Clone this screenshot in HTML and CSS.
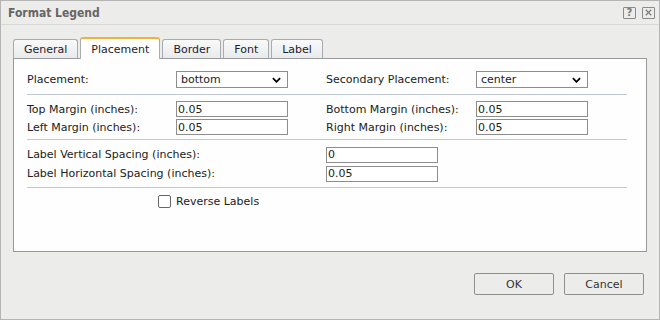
FILE: index.html
```html
<!DOCTYPE html>
<html lang="en">
<head>
  <meta charset="UTF-8" />
  <title>Format Legend</title>
  <link rel="stylesheet" href="styles.css">
</head>
<body>

  <div class="dialog">
    <div class="titlebar">
      <div class="title">Format Legend</div>
      <div class="title-icons">
        <span class="icon-btn help">?</span>
        <span class="icon-btn close">
          <svg viewBox="0 0 12 11" width="12" height="11">
            <path d="M3 2.5l6 6M9 2.5l-6 6" stroke="#7a7a7a" stroke-width="1.2" fill="none"/>
          </svg>
        </span>
      </div>
    </div>

    <div class="tabs">
      <div class="tab">General</div>
      <div class="tab active">Placement</div>
      <div class="tab">Border</div>
      <div class="tab">Font</div>
      <div class="tab">Label</div>
    </div>

    <div class="panel">
      <div class="grid first">
        <label>Placement:</label>
        <div class="select">bottom
          <svg viewBox="0 0 10 6" width="9" height="6"><path d="M1 1l4 4 4-4" stroke="#000" stroke-width="2" fill="none"/></svg>
        </div>
        <label>Secondary Placement:</label>
        <div class="select">center
          <svg viewBox="0 0 10 6" width="9" height="6"><path d="M1 1l4 4 4-4" stroke="#000" stroke-width="2" fill="none"/></svg>
        </div>
      </div>

      <div class="sep sep-1"></div>

      <div class="grid">
        <label>Top Margin (inches):</label>
        <div><input type="text" value="0.05"></div>
        <label>Bottom Margin (inches):</label>
        <div><input type="text" value="0.05"></div>
        <label>Left Margin (inches):</label>
        <div><input type="text" value="0.05"></div>
        <label>Right Margin (inches):</label>
        <div><input type="text" value="0.05"></div>
      </div>

      <div class="sep sep-2"></div>

      <div class="grid wide">
        <label>Label Vertical Spacing (inches):</label>
        <div><input type="text" value="0"></div>
        <label>Label Horizontal Spacing (inches):</label>
        <div><input type="text" value="0.05"></div>
      </div>

      <div class="sep sep-3"></div>

      <div class="check-row">
        <span class="checkbox"></span>
        <span>Reverse Labels</span>
      </div>
    </div>

    <div class="buttons">
      <button>OK</button>
      <button>Cancel</button>
    </div>
  </div>

</body>
</html>
```

FILE: styles.css
```css
body {
  margin: 0;
  padding: 0;
  font-family: 'DejaVu Sans', sans-serif;
  font-size: 11px;
  color: #222;
  background: #fff;
}

.dialog {
  width: 660px;
  height: 320px;
  box-sizing: border-box;
  border: 1px solid #b4b4b4;
  background: #ecedea;
}

.titlebar {
  height: 23px;
  border-bottom: 1px solid #d8d9d6;
  display: flex;
  align-items: center;
  justify-content: space-between;
  padding: 0 4px 0 7px;
}

.title {
  font-family: 'DejaVu Sans Condensed', 'DejaVu Sans', sans-serif;
  font-weight: bold;
  font-size: 12px;
  color: #666;
}

.title-icons {
  display: flex;
  gap: 6px;
}

.icon-btn {
  width: 11px;
  height: 10px;
  border: 1px solid #8a8a8a;
  border-radius: 1px;
  display: flex;
  align-items: center;
  justify-content: center;
  font-size: 10px;
  font-weight: bold;
  color: #7a7a7a;
  line-height: 1;
}

.tabs {
  display: flex;
  align-items: flex-end;
  gap: 2px;
  margin: 12px 0 0 12px;
  height: 21px;
}

.tab {
  height: 19px;
  box-sizing: border-box;
  padding: 0 10px;
  border: 1px solid #a7acb1;
  border-bottom: none;
  border-radius: 3px 3px 0 0;
  background: linear-gradient(#f9f9f9, #e9eaec);
  display: flex;
  align-items: center;
  font-size: 11px;
  color: #1c1c2c;
}

.tab.active {
  height: 22px;
  padding: 0 10px;
  border-top: 2px solid #f2b233;
  background: #fff;
  margin-bottom: -1px;
  position: relative;
}

.panel {
  margin: 0 12px;
  height: 194px;
  box-sizing: border-box;
  border: 1px solid #9a9a9a;
  background: #fdfefd;
  padding: 12px 19px 0 13px;
}

.grid {
  display: grid;
  grid-template-columns: 149px 150px 150px 112px;
  grid-auto-rows: 18px;
  align-items: center;
}

.grid.first {
  grid-auto-rows: 17px;
}

.grid.wide {
  grid-template-columns: 299px 112px;
  grid-auto-rows: 19px;
}

.sep {
  height: 1px;
  background: #bfc8d2;
}

.sep-1 {
  margin: 6px 0 5px;
}

.sep-2 {
  margin: 3px 0 5px;
}

.sep-3 {
  margin: 4px 0 0;
}

input {
  width: 112px;
  height: 16px;
  box-sizing: border-box;
  border: 1px solid #8d8d8d;
  padding: 0 1px;
  margin: 0;
  font-family: 'DejaVu Sans', sans-serif;
  font-size: 11px;
  color: #222;
  display: block;
}

.select {
  width: 112px;
  height: 17px;
  box-sizing: border-box;
  border: 1px solid #8d8d8d;
  background: #fff;
  padding: 0 6px 0 4px;
  display: flex;
  align-items: center;
  justify-content: space-between;
}

.check-row {
  display: flex;
  align-items: center;
  gap: 5px;
  margin: 7px 0 0 131px;
}

.checkbox {
  width: 11px;
  height: 11px;
  border: 1px solid #666;
  border-radius: 2px;
  background: #fff;
}

.buttons {
  display: flex;
  justify-content: flex-end;
  gap: 10px;
  margin: 21px 15px 0 0;
}

button {
  width: 80px;
  height: 22px;
  border: 1px solid #8f8f8f;
  border-radius: 2px;
  background: #ecedea;
  font-family: 'DejaVu Sans', sans-serif;
  font-size: 11px;
  color: #333;
}
```
